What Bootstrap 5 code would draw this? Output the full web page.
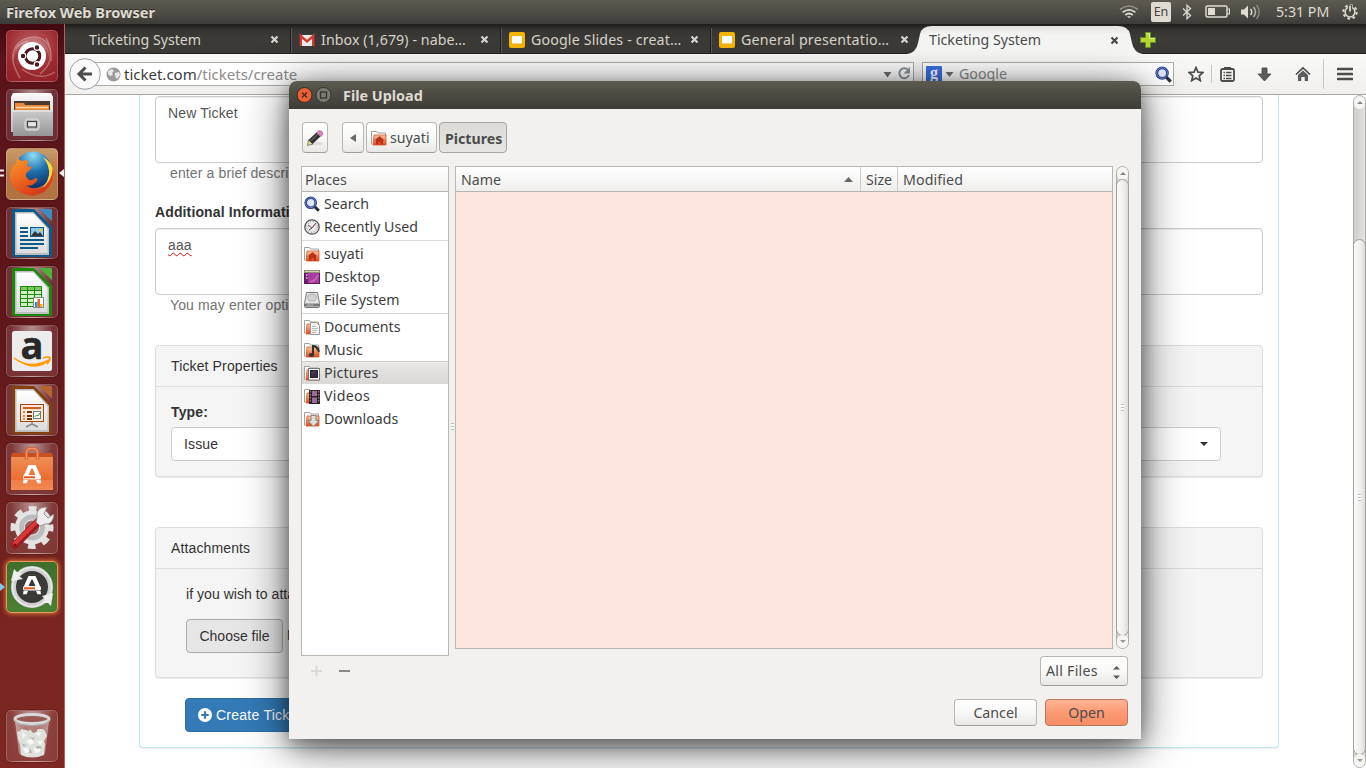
<!DOCTYPE html>
<html lang="en">
<head>
<meta charset="utf-8">
<meta name="viewport" content="width=device-width, initial-scale=1">
<title>Ticketing System</title>
<link href="https://cdn.jsdelivr.net/npm/bootstrap@5.3.0/dist/css/bootstrap.min.css" rel="stylesheet">
<style>
:root{--ui:"Noto Sans","Open Sans",sans-serif;--web:"Liberation Sans",Arial,sans-serif}
html,body{width:1366px;height:768px;overflow:hidden}
body{font-family:var(--ui);font-size:14.2px;line-height:20px;color:#3c3c3c;background:#fff}
svg{display:block;flex:none}
/* system panel */
.sys-panel{height:24px;background:linear-gradient(#5d5b50,#4b4a43 60%,#3c3b37);color:#dfdbd2;padding-left:6px;padding-right:8px}
.sys-panel b{font-size:14.55px;text-shadow:0 -1px 0 #2a2925}
.lang-box{width:20px;height:20px;margin-left:12px;background:#dfdbd2;color:#45443e;border-radius:2px;font-size:12.5px;line-height:20px;text-align:center}
/* launcher */
.launcher{width:65px;padding:6px 0 6px 6px;gap:7px;background:linear-gradient(#43090f,#5b141a 5%,#5e161a 35%,#78241f 80%,#7e2722);border-right:1px solid #a8655f}
.tile{width:52px;height:52px;border-radius:5px;border:1px solid rgba(255,255,255,.2);background:radial-gradient(ellipse at 50% -10%,rgba(255,255,255,.55),rgba(255,255,255,.12) 60%,rgba(255,255,255,.1));box-shadow:0 0 2px rgba(0,0,0,.4);position:relative}
.tile svg{margin:-1px}
.tile-dash{background:radial-gradient(circle at 50% 30%,#c0666a,#9c2a30 60%,#8f2026)}
.tile-fox{background:linear-gradient(#c99b6a,#b57745 50%,#b07040)}
.tile-upd{background:linear-gradient(#3f6e2d,#4a8034);border-color:#e79a55;box-shadow:0 0 4px 1px #d9763c}
.pip{position:absolute;top:18px}
/* tabs */
.tab-strip{height:30px;background:linear-gradient(#1d1c1a,#353430 20%,#3c3b37 50%,#3a3935);padding-left:15px;border-bottom:1px solid #22211f}
.btab{width:210px;height:29px;padding:2px 11px 0 9px;color:#d8d4cb;position:relative}
.btab+.btab:not(.on)::before{content:"";position:absolute;left:1px;top:4px;bottom:0;width:1px;background:#5a5952;box-shadow:-1px 0 #1f1e1c}
.btab.on{color:#4c4c4c;height:30px}
.btab .shape{position:absolute;left:-13px;top:1px}
.btab>span,.btab>svg:not(.shape){position:relative}
/* toolbar */
.toolbar{height:41px;background:linear-gradient(#f9f9f8,#f0efee);border-bottom:1px solid #aaa69f;position:relative}
.field-box{height:24px;background:#fff;border:1px solid #aeaca7}
.url-box{margin-left:20px;width:829px;padding-left:20px;padding-right:1px}
.url-text{font-size:15px;margin-left:3px}
.find-box{margin-left:8px;width:252px;padding-left:3px;padding-right:1px;color:#8a8a8a}
.back{position:absolute;left:4px;top:4px}
.vline{width:1px;background:#c8c8c8}
/* web page */
.web{font-family:var(--web);font-size:14px;line-height:20px;color:#333;background:#fff;letter-spacing:.13px}
.sheet{width:1140px;height:653px;margin-left:74px;padding:1px 15px 0;border:1px solid #bce8f1;border-top:0;border-radius:0 0 4px 4px;box-shadow:0 1px 1px rgba(0,0,0,.08)}
.area{height:67px;padding:6px 12px;border:1px solid #ccc;border-radius:4px;color:#555;box-shadow:inset 0 1px 1px rgba(0,0,0,.075)}
.hint{padding-left:15px;color:#737373}
.panel-x{border:1px solid #ddd;border-radius:4px;background:#f5f5f5;box-shadow:0 1px 1px rgba(0,0,0,.08)}
.panel-h{height:41px;padding:10px 15px;border-bottom:1px solid #ddd}
.pick{height:34px;width:1050px;border:1px solid #ccc;border-radius:4px;background:#fff;padding:0 12px}
.file-btn{height:34px;width:97px;border:1px solid #adadad;border-radius:4px;background:#e6e6e6;line-height:32px;text-align:center;letter-spacing:0}
.make{margin:20px 0 0 30px;height:34px;width:130px;background:#337ab7;border:1px solid #2e6da4;border-radius:4px;color:#fff;padding:0 12px;gap:4px}
.squig{text-decoration:underline wavy #e01010 1px;text-underline-offset:2px}
/* scrollbars */
.sbar{width:13px;background:linear-gradient(90deg,#cfcecc,#e2e1df);border:1px solid #b0aea9;border-radius:7px}
.sbar .cap{height:13px;background:#f6f5f4;border-radius:7px}
.sbar .cap::after{content:"";border:3px solid transparent;border-bottom-color:#8a8883;border-top:0;width:0;height:0}
.sbar .cap.dn::after{border-bottom:0;border-top:3px solid #9b9994}
.sbar .grip{border:1px solid #a3a09a;border-radius:7px;margin:-1px -1px;background:linear-gradient(90deg,#fbfbfa,#efeeed 60%,#dcdbd9)}
.ticks{width:3px;height:7px;background:repeating-linear-gradient(#bbb 0 1px,#fff 1px 3px)}
/* dialog */
.dlg{position:absolute;left:289px;top:81px;width:852px;height:658px;background:#f2f1f0;border-radius:8px 8px 0 0;box-shadow:0 8px 46px rgba(0,0,0,.62),0 5px 18px rgba(0,0,0,.38)}
.dlg-title{height:28px;border-radius:8px 8px 0 0;background:linear-gradient(#5c5a50,#4c4b43 50%,#3d3c37);color:#dfdbd2;padding-left:7px;font-size:14.4px}
.gbtn{border:1px solid #bab7b2;border-bottom-color:#a19e99;border-radius:4px;background:linear-gradient(#fff,#f8f8f7 50%,#e9e8e6);color:#4c4c4c;display:flex;align-items:center;white-space:nowrap}
.gbtn.down{background:linear-gradient(#dcdad7,#e7e6e4);border-color:#a9a6a1}
.gbtn.go{background:linear-gradient(#ffb494,#fb9a74 50%,#f58d65);border-color:#b9775b}
.pane{background:#fff;border:1px solid #bab6b0}
.pane-h{height:25px;background:linear-gradient(#fff,#efeeed);border-bottom:1px solid #b7b4af;color:#4c4c4c;padding-top:3px}
.prow{height:23px;padding-left:2px;gap:4px;display:flex;align-items:center;white-space:nowrap}
.prow.sel{background:linear-gradient(#eae8e7,#dad8d5);border-top:1px solid #cfcdca}
.psep{height:4px;padding-top:2px}
.psep::after{content:"";display:block;height:1px;background:#dcdad8}
.rose{background:#fde6dd}
</style>
</head>
<body class="d-flex flex-column">

<svg width="0" height="0" class="position-absolute" aria-hidden="true">
  <defs>
    <linearGradient id="or" x1="0" y1="0" x2="0" y2="1"><stop offset="0" stop-color="#f9c9a2"/><stop offset="1" stop-color="#dd4814"/></linearGradient>
    <linearGradient id="sv" x1="0" y1="0" x2="0" y2="1"><stop offset="0" stop-color="#fafafa"/><stop offset="1" stop-color="#b9b9b9"/></linearGradient>
    <linearGradient id="cab" x1="0" y1="0" x2="0" y2="1"><stop offset="0" stop-color="#c9c9c9"/><stop offset="1" stop-color="#969696"/></linearGradient>
    <linearGradient id="paper" x1="0" y1="0" x2="0" y2="1"><stop offset="0" stop-color="#fff"/><stop offset="1" stop-color="#dcdcdc"/></linearGradient>
    <linearGradient id="bag" x1="0" y1="0" x2="0" y2="1"><stop offset="0" stop-color="#ee8f55"/><stop offset=".68" stop-color="#ee6c30"/><stop offset=".7" stop-color="#ef7f48"/><stop offset="1" stop-color="#f28850"/></linearGradient>
    <linearGradient id="act" x1="0" y1="0" x2="0" y2="1"><stop offset="0" stop-color="#e3e2e0"/><stop offset=".3" stop-color="#f4f4f3"/><stop offset="1" stop-color="#f9f9f8"/></linearGradient>
    <radialGradient id="blu" cx=".5" cy=".1" r=".9"><stop offset="0" stop-color="#8fdcf5"/><stop offset=".5" stop-color="#1d6fae"/><stop offset="1" stop-color="#102f66"/></radialGradient>
    <linearGradient id="fx" x1="0" y1="0" x2=".6" y2="1"><stop offset="0" stop-color="#f79a2c"/><stop offset=".5" stop-color="#ef6a1f"/><stop offset="1" stop-color="#d2391a"/></linearGradient>
    <linearGradient id="glass" x1="0" y1="0" x2="1" y2="0"><stop offset="0" stop-color="#fff" stop-opacity=".5"/><stop offset=".3" stop-color="#fff" stop-opacity=".12"/><stop offset=".7" stop-color="#fff" stop-opacity=".12"/><stop offset="1" stop-color="#fff" stop-opacity=".45"/></linearGradient>
    <g id="folder"><path d="M.5 14.500v-13h5l1 1.500h8v3" fill="#fff" stroke="#a3a09b"/><path d="M3 5h12v10h-13z" fill="url(#or)" stroke="#cc5a2c" stroke-width=".8"/></g>
    <g id="homeg"><path d="M3.500 10.500L8.500 6l5 4.500h-1.500v4H9.500V12h-2v2.500H5v-4z" fill="#b8321a"/></g>
    <g id="lens"><circle cx="6.700" cy="6.700" r="5" fill="#dfe6f5" stroke="#263c82" stroke-width="2.600"/><circle cx="6.700" cy="6.700" r="5" fill="none" stroke="#7b93d6" stroke-width=".8"/><path d="M10.800 10.800l4 4" stroke="#2b2b35" stroke-width="3"/></g>
    <g id="x"><path d="M1.500 1.500l6 6M7.500 1.500l-6 6" stroke="currentColor" stroke-width="2.200"/></g>
    <g id="slides"><rect width="16" height="16" rx="2" fill="#f4b400"/><rect x="3" y="4" width="10" height="7.500" fill="#fff"/></g>
    <g id="appmark"><path d="M22.500 22h7l4.500 10h-4.500l-3-6.500h-1l-3 6.500H18zM17.500 37h4.500l-1.500 3.200H17zM30 37h4.500l.5 3.200h-3.500z" fill="#fff"/><rect x="17" y="32" width="18" height="4.600" rx="1.500" fill="#fff"/><path d="M18 34.300h11" stroke="#e95420" stroke-width="2"/></g>
    <g id="sheetpage"><path d="M6 4a2 2 0 0 1 2-2h20l18 18v28a2 2 0 0 1-2 2H8a2 2 0 0 1-2-2z" fill="currentColor"/><path d="M9 5h18.500L43 21.500V48H9z" fill="#bdbdbd"/><path d="M10.500 6.500h17L41.500 22v24h-31z" fill="url(#paper)"/></g>
  </defs>
</svg>

<header class="sys-panel d-flex align-items-center flex-shrink-0">
  <b class="me-auto">Firefox Web Browser</b>
  <svg width="20" height="14" viewBox="0 0 20 14" fill="none" stroke="#dfdbd2" stroke-width="1.700"><path d="M1 4.500q9-7 18 0" opacity=".45"/><path d="M3.600 7.300q6.400-5 12.800 0M6.200 10q3.800-3 7.600 0"/><path d="M8 11.300h4l-2 2z" fill="#dfdbd2" stroke="none"/></svg>
  <span class="lang-box">En</span>
  <svg style="margin-left:10px" width="12" height="16" viewBox="0 0 12 16" fill="none" stroke="#dfdbd2" stroke-width="1.300"><path d="M2 4.500l7.500 7L6 14.700V1.300l3.500 3.200-7.500 7"/></svg>
  <svg style="margin-left:12px" width="25" height="14" viewBox="0 0 25 14"><rect x="1" y="1" width="21" height="11" rx="1.500" fill="none" stroke="#dfdbd2" stroke-width="1.500"/><path d="M22.500 4h2v5h-2" fill="none" stroke="#dfdbd2" stroke-width="1.200"/><rect x="3" y="3" width="7" height="7" fill="#dfdbd2"/></svg>
  <svg style="margin-left:11px" width="20" height="16" viewBox="0 0 20 16" fill="none" stroke="#dfdbd2" stroke-width="1.500"><path d="M0 5.500h3l4-4v13l-4-4H0z" fill="#dfdbd2" stroke="none"/><path d="M9.500 5q2.500 3 0 6"/><path d="M12.500 3q4 5 0 10" opacity=".7"/><path d="M15.500 1q5.500 7 0 14" opacity=".4"/></svg>
  <span class="text-nowrap" style="margin-left:15px;font-size:14.2px;width:54px">5:31 PM</span>
  <svg style="margin-left:12px" width="16" height="16" viewBox="0 0 16 16" fill="none" stroke="#dfdbd2"><circle cx="8" cy="8" r="6.700" stroke-width="2" stroke-dasharray="2.600 2.660"/><circle cx="8" cy="8" r="4.900" stroke-width="1.500"/><path d="M8 1v7" stroke="#4b4a43" stroke-width="4"/><path d="M8 1.500v6" stroke-width="1.800"/></svg>
</header>

<div class="d-flex flex-grow-1" style="min-height:0">
  <nav class="launcher d-flex flex-column flex-shrink-0">
    <div class="tile tile-dash"><svg width="52" height="52" viewBox="0 0 52 52"><path d="M7 30Q6 8 30 7q16 3 15 24M14 48Q-4 18 22 11M49 42Q34 52 16 39M40 8Q52 30 34 44" fill="none" stroke="#fff" stroke-width="1.500" opacity=".3"/><path d="M8 30Q8 8 30 8q14 4 14 22-4-16-18-18Q10 14 8 30z" fill="#fff" opacity=".18"/><circle cx="26" cy="26" r="14" fill="#fff"/><circle cx="26.500" cy="26" r="7.300" fill="none" stroke="#4a1a1c" stroke-width="3"/><g fill="#4a1a1c" stroke="#fff" stroke-width="1.200"><circle cx="17" cy="26" r="2.800"/><circle cx="31" cy="17.500" r="2.800"/><circle cx="31" cy="34.500" r="2.800"/></g></svg></div>
    <div class="tile"><svg width="52" height="52" viewBox="0 0 52 52"><path d="M7 4h38l2 4v35H5V8z" fill="url(#sv)"/><path d="M8 12h36v11H8z" fill="#4a3a30"/><path d="M9 14h9l1 2h24v7H9z" fill="#e98a3a"/><path d="M10 18.500h32" stroke="#fbd9a8" stroke-width="1.500"/><path d="M7 22h40v25H7z" fill="url(#cab)"/><path d="M7 21h40v2H7z" fill="#dedede"/><rect x="19" y="30" width="14" height="11" rx="2.500" fill="#bdbdbd" stroke="#e4e4e4"/><rect x="21.500" y="32.500" width="9" height="5.500" fill="#e6e6e6" stroke="#444" stroke-width="1.200"/></svg></div>
    <div class="tile tile-fox"><svg class="pip" style="left:-6px;top:21px" width="5" height="8"><path d="M0 1.500h4M0 6.500h4" stroke="#eee" stroke-width="2.200"/></svg><svg class="pip" style="left:53px;top:21px" width="6" height="8"><path d="M5 0v8L0 4z" fill="#eee"/></svg><svg width="52" height="52" viewBox="0 0 52 52"><circle cx="27" cy="22" r="18.500" fill="url(#blu)"/><path d="M37 9q7 9 6 18-2 12-14 17 17 1 19-17-1-13-11-18z" fill="#ffd83a"/><path d="M46 17q4 10 0 18-6 11-19 12.500Q6 47 4 28q0-9 6-13l1-6q2 3 5 4 5-2 6 0l-1 5 5 1-3 4q-4 2-3 5 2 5 6 4 3-2 5-2 1 3-2 5-4 4-9 2 8 7 19 1 9-8 8-26z" fill="url(#fx)"/></svg></div>
    <div class="tile"><svg width="52" height="52" viewBox="0 0 52 52"><use href="#sheetpage" color="#0c5a8c"/><path d="M33.500 2H45a1 1 0 0 1 1 1v11.500z" fill="#3c8cc2"/><g stroke="#0c5a8c" stroke-width="2"><path d="M14 21h8M14 25h8M14 29h8M14 33h24M14 37h24M14 41h18"/></g><rect x="24.500" y="20.500" width="13" height="9" fill="#8cc8ee" stroke="#0c5a8c"/><circle cx="35" cy="23" r="1.500" fill="#f4c430"/><path d="M25 29l4-5 3 3 2-2 3 4z" fill="#333"/></svg></div>
    <div class="tile"><svg width="52" height="52" viewBox="0 0 52 52"><use href="#sheetpage" color="#1b8a0c"/><path d="M33.500 2H45a1 1 0 0 1 1 1v11.500z" fill="#4db13c"/><path d="M14.500 20.500h21v20h-21z" fill="#d3f0c4"/><path d="M14 20h22v4H14z" fill="#7fc765"/><path d="M14.500 20.500h21v20h-21zM14.500 24.500h21m-21 4h21m-21 4h21m-21 4h21m-14-16v20m7-20v20" fill="none" stroke="#178a0a"/><rect x="27.500" y="31.500" width="10" height="10" fill="#fff" stroke="#888"/><path d="M29 36h2.500v5H29z" fill="#2a8fd8"/><path d="M31.500 33h2.500v8h-2.500z" fill="#e06a2a"/><path d="M34 38h2.500v3H34z" fill="#f1b500"/></svg></div>
    <div class="tile"><svg width="52" height="52" viewBox="0 0 52 52"><rect x="6" y="6" width="40" height="40" rx="2.500" fill="#ececec"/><text x="26" y="34" text-anchor="middle" font-family="Open Sans,sans-serif" font-weight="700" font-size="38" fill="#282828" stroke="#282828" stroke-width=".5">a</text><path d="M8 33q16 12 35 2-14 13-35-2z" fill="#ff9900" stroke="#ff9900" stroke-width="1.500"/><path d="M37 33q6-2 7 0 0 3-3 6" fill="none" stroke="#ff9900" stroke-width="1.800"/></svg></div>
    <div class="tile"><svg width="52" height="52" viewBox="0 0 52 52"><use href="#sheetpage" color="#84400e"/><path d="M33.500 2H45a1 1 0 0 1 1 1v11.500z" fill="#b56530"/><rect x="14.500" y="20.500" width="23" height="17" fill="#f9e9da" stroke="#a3440e"/><path d="M17 24h18" stroke="#d4601c" stroke-width="2"/><path d="M17 28h2m-2 4h2m-2 3h2" stroke="#e08a4a" stroke-width="2"/><path d="M21 28h5m-5 4h5m-5 3h5" stroke="#7a3208" stroke-width="2"/><rect x="27.500" y="27.500" width="7" height="7" fill="#fff" stroke="#777"/><path d="M28.500 33l2-2 1.500 1 2-3" stroke="#2a9a2a" fill="none"/><path d="M26 38v2l-6 3m6-3l6 3" stroke="#888" fill="none" stroke-width="1.500"/></svg></div>
    <div class="tile"><svg width="52" height="52" viewBox="0 0 52 52"><path d="M6 10h40l1 4v2H5v-2z" fill="#c94f20"/><path d="M5 14h42v33H5z" fill="url(#bag)"/><path d="M20.500 17V10q0-4.500 4-4.500h3q4 0 4 4.500v7" fill="none" stroke="#d9602e" stroke-width="3.400"/><path d="M20.500 17V10q0-4.500 4-4.500h3q4 0 4 4.500v7" fill="none" stroke="#f2936a" stroke-width="1.400"/><use href="#appmark"/></svg></div>
    <div class="tile"><svg width="52" height="52" viewBox="0 0 52 52"><circle cx="26" cy="25.500" r="18.500" fill="none" stroke="#e1e1e1" stroke-width="6" stroke-dasharray="7.500 7.030" stroke-dashoffset="3.700"/><circle cx="26" cy="25.500" r="12" fill="none" stroke="#e4e4e4" stroke-width="10"/><circle cx="26" cy="25.500" r="10.500" fill="none" stroke="#bdbdbd" stroke-width="5"/><path d="M9 43L32 20" stroke="#9a1a1d" stroke-width="7.500" stroke-linecap="round"/><path d="M8.500 42L31 19.500" stroke="#d8383a" stroke-width="4" stroke-linecap="round"/><path d="M31 16l-1 4 4 4 5-2q8 1 9-10l-6 4-4-4 3-7q-12 0-10 11z" fill="#eee" stroke="#888" stroke-width=".8"/><circle cx="9" cy="43" r="1.600" fill="#7e1114"/></svg></div>
    <div class="tile tile-upd"><svg class="pip" style="left:-6px;top:22px" width="5" height="8"><path d="M0 0v8L5 4z" fill="#7fc9ee"/></svg><svg width="52" height="52" viewBox="0 0 52 52"><circle cx="26" cy="26" r="18.500" fill="#3a3a38" stroke="#cfcfcf" stroke-width="5"/><circle cx="26" cy="26" r="19.500" fill="none" stroke="#eaeaea" stroke-width="1.500"/><path d="M5 20L8 8l3 3 5 1-3 3 4 3z" fill="#eee"/><path d="M47 32l-2 13-3-3-6 0 3-4-3-3z" fill="#eee"/><use href="#appmark" y="-7"/></svg></div>
    <div class="tile mt-auto"><svg width="52" height="52" viewBox="0 0 52 52"><path d="M9 11l4 33q13 6 26 0l4-33z" fill="url(#glass)"/><path d="M11 22l3-1 1-2 5 1 3 1 1-2 3 4 3-1 2-3 5 0 2 2 2 5-3 5 1 3-1 11q-12 5-23 0l-1-10-2-6z" fill="#dfe1dd"/><path d="M16 22l4 3-3 4zM30 23l5-1-2 5zM20 31l6-2 2 4-4 2zM31 31l6 0-3 4zM17 38l5 0 1 4-4 1zM28 38l6 0 0 4-5 1z" fill="#f8f9f7"/><path d="M22 25l4 3 3-1-2 3zM15 33l4 2 2-1-3 3zM30 36l4 0 2 2-5 1zM24 38l2 5-3 0z" fill="#b4b8b1"/><ellipse cx="26" cy="9" rx="17" ry="4.500" fill="#985854" stroke="#d9d9d9" stroke-width="3"/><path d="M9 10q2 5.500 17 5.500T43 10" fill="none" stroke="#aaa" stroke-width="1"/></svg></div>
  </nav>

  <div class="d-flex flex-column flex-grow-1">
    <div class="tab-strip d-flex flex-shrink-0">
      <div class="btab d-flex align-items-center"><span class="me-auto text-nowrap">Ticketing System</span><svg width="9" height="9"><use href="#x"/></svg></div>
      <div class="btab d-flex align-items-center"><svg width="16" height="16" viewBox="0 0 16 16" style="margin-right:6px"><path d="M1 3h14v11H1z" fill="#eee"/><path d="M1.800 14V4L8 9.500 14.200 4v10" fill="none" stroke="#d93a2f" stroke-width="2.400"/></svg><span class="me-auto text-nowrap" style="letter-spacing:.08px">Inbox (1,679) - nabe…</span><svg width="9" height="9"><use href="#x"/></svg></div>
      <div class="btab d-flex align-items-center"><svg width="16" height="16" style="margin-right:6px"><use href="#slides"/></svg><span class="me-auto text-nowrap" style="letter-spacing:.16px">Google Slides - creat…</span><svg width="9" height="9"><use href="#x"/></svg></div>
      <div class="btab d-flex align-items-center"><svg width="16" height="16" style="margin-right:6px"><use href="#slides"/></svg><span class="me-auto text-nowrap" style="letter-spacing:.24px">General presentatio…</span><svg width="9" height="9"><use href="#x"/></svg></div>
      <div class="btab on d-flex align-items-center"><svg class="shape" width="237" height="29" viewBox="0 0 237 29"><path d="M0 29Q9 28 11 18L13 9Q15 1 25 1H211Q221 1 223 9L225 18Q227 28 236 29z" fill="url(#act)"/></svg><span class="me-auto text-nowrap">Ticketing System</span><svg width="9" height="9"><use href="#x"/></svg></div>
      <svg style="margin:8px 0 0 10px" width="16" height="16" viewBox="0 0 16 16"><path d="M5.500.5h5v5h5v5h-5v5h-5v-5h-5v-5h5z" fill="#b7d433" stroke="#5f9423"/><path d="M6.500 1.500h3v5h5" fill="none" stroke="#e1ef8e"/></svg>
    </div>

    <div class="toolbar d-flex align-items-center flex-shrink-0">
      <div class="field-box url-box d-flex align-items-center">
        <svg width="15" height="15" viewBox="0 0 15 15"><circle cx="7.500" cy="7.500" r="7" fill="#9a9a9a"/><path d="M2 4l4-2 2 2-2 2 1 2-3 1-2-2zM9 6l4-1 1 3-3 4-2-3z" fill="#e8e8e8"/></svg>
        <span class="url-text text-nowrap me-auto">ticket.com<span style="color:#8c8c8c">/tickets/create</span></span>
        <svg width="30" height="16" viewBox="0 0 30 16"><path d="M1.500 6h8l-4 5.500z" fill="#6e6e6e"/><path d="M26 3.800A5 5 0 1 0 27 9" fill="none" stroke="#8b939b" stroke-width="2"/><path d="M28 1v6.500h-6.500z" fill="#8b939b"/></svg>
      </div>
      <div class="field-box find-box d-flex align-items-center">
        <svg width="28" height="16" viewBox="0 0 28 16"><rect width="16" height="16" rx="1" fill="#3b6fe0"/><text x="8" y="11.500" text-anchor="middle" font-family="Liberation Serif,serif" font-weight="700" font-size="16" fill="#fff">g</text><path d="M19.500 6h8l-4 5z" fill="#6e6e6e"/></svg>
        <span class="me-auto" style="margin-left:5px">Google</span>
        <svg width="17" height="17" viewBox="0 0 16 16"><use href="#lens"/></svg>
      </div>
      <svg style="margin-left:14px" width="16" height="16" viewBox="0 0 16 16"><path d="M8 1.500l2 4.600 4.900.4-3.700 3.300 1.100 4.800L8 12l-4.300 2.600 1.100-4.800L1.100 6.500 6 6.100z" fill="none" stroke="#4c4c4c" stroke-width="1.700"/></svg>
      <span class="vline" style="height:18px;margin-left:7px"></span>
      <svg style="margin-left:8px" width="15" height="16" viewBox="0 0 15 16"><rect x="1" y="3" width="13" height="12" rx="1.500" fill="none" stroke="#4c4c4c" stroke-width="1.800"/><rect x="4" y="1" width="7" height="3" fill="#4c4c4c"/><path d="M3.500 6.500h1.500m1 0h5.500m-8 3h1.500m1 0h5.500m-8 3h1.500m1 0h5.500" stroke="#4c4c4c" stroke-width="1.500"/></svg>
      <svg style="margin-left:22px" width="15" height="15" viewBox="0 0 15 15"><path d="M5 1h5v6h4L7.500 14 1 7h4z" fill="#5c5c5c" stroke="#444" stroke-width=".8"/></svg>
      <svg style="margin-left:23px" width="16" height="16" viewBox="0 0 16 16"><path d="M1 8.500L8 2l7 6.500" fill="none" stroke="#4c4c4c" stroke-width="1.700"/><path d="M3 9l5-4.500L13 9v6H9.700v-4H6.300v4H3z" fill="#5c5c5c"/></svg>
      <span class="vline" style="height:30px;margin-left:12px"></span>
      <svg style="margin-left:13px" width="16" height="14" viewBox="0 0 16 14"><path d="M1 2h14M1 7h14M1 12h14" stroke="#4c4c4c" stroke-width="2.600" stroke-linecap="round"/></svg>
      <svg class="back" width="32" height="32" viewBox="0 0 32 32"><circle cx="16" cy="16" r="15.300" fill="#fbfbfb" stroke="#98a0aa"/><path d="M23 16H10.500M16.500 9.500L10 16l6.500 6.500" fill="none" stroke="#4c4c4c" stroke-width="3"/></svg>
    </div>

    <div class="web d-flex flex-grow-1 justify-content-between" style="min-height:0">
      <main class="sheet text-nowrap">
        <div class="area">New Ticket</div>
        <div class="hint">enter a brief descri</div>
        <div class="fw-bold" style="margin:19px 0 6px">Additional Informati</div>
        <div class="area"><span class="squig">aaa</span></div>
        <div class="hint">You may enter opti</div>
        <section class="panel-x" style="margin-top:30px;height:132px">
          <div class="panel-h">Ticket Properties</div>
          <div style="padding:15px 15px">
            <div class="fw-bold" style="margin-bottom:5px">Type:</div>
            <div class="pick d-flex align-items-center justify-content-between"><span>Issue</span><svg width="8" height="4"><path d="M0 0h8L4 4z" fill="#333"/></svg></div>
          </div>
        </section>
        <section class="panel-x" style="margin-top:50px;height:151px">
          <div class="panel-h">Attachments</div>
          <div style="padding:15px 30px">
            <div style="margin-bottom:15px;letter-spacing:.05px">if you wish to atta</div>
            <div class="d-flex"><div class="file-btn">Choose file</div><span style="margin:6px 0 0 4px">N</span></div>
          </div>
        </section>
        <div class="make d-flex align-items-center"><svg width="14" height="14" viewBox="0 0 14 14"><circle cx="7" cy="7" r="7" fill="#fff"/><path d="M7 3.200v7.600M3.200 7h7.600" stroke="#337ab7" stroke-width="2.200"/></svg><span style="letter-spacing:.25px">Create Tick</span></div>
      </main>
      <div class="sbar d-flex flex-column">
        <div class="cap d-flex align-items-center justify-content-center"></div>
        <div style="height:131px"></div>
        <div class="grip flex-grow-1 d-flex align-items-center justify-content-center"><div class="ticks"></div></div>
        <div class="cap dn d-flex align-items-center justify-content-center"></div>
      </div>
    </div>
  </div>
</div>

<section class="dlg">
  <div class="dlg-title d-flex align-items-center fw-bold">
    <svg width="36" height="18" viewBox="0 0 36 18"><circle cx="8.500" cy="9" r="7.500" fill="#ea6037" stroke="#3a2a22"/><path d="M6 6.500l5 5m0-5l-5 5" stroke="#4a2a1c" stroke-width="1.400"/><circle cx="27.500" cy="9" r="7.500" fill="#7b7a73" stroke="#33322e"/><rect x="24.500" y="6" width="6" height="6" fill="none" stroke="#33322e" stroke-width="1.300"/></svg>
    <span style="margin-left:11px;padding-top:2px">File Upload</span>
  </div>
  <div class="d-flex" style="padding:13px 0 0 13px">
    <div class="gbtn justify-content-center" style="width:26px;height:31px"><svg width="18" height="18" viewBox="0 0 18 18"><ellipse cx="11" cy="14.500" rx="6" ry="1.800" fill="#ddd"/><path d="M1.500 16.500l1-5.500 4.500 4z" fill="#efe29a" stroke="#554" stroke-width=".7"/><path d="M2.500 11L10.500 3.500l4 4L6.500 15z" fill="#333"/><path d="M4.500 12L12 5" stroke="#888" stroke-width=".8"/><path d="M10.800 3.500l2-2q4 0 4 4l-2 2z" fill="#d98ac8" stroke="#946" stroke-width=".6"/></svg></div>
    <div class="gbtn justify-content-center" style="width:22px;height:31px;margin-left:14px"><svg width="6" height="8"><path d="M6 0v8L0 4z" fill="#6a6a6a"/></svg></div>
    <div class="gbtn" style="width:71px;height:31px;margin-left:2px;padding-left:4px;gap:3px"><svg width="16" height="16" viewBox="0 0 16 16"><use href="#folder"/><use href="#homeg"/></svg>suyati</div>
    <div class="gbtn down fw-bold" style="width:68px;height:31px;margin-left:2px;padding-left:5px;padding-top:2px">Pictures</div>
  </div>
  <div class="d-flex" style="padding:13px 12px 0 12px">
    <div class="pane" style="width:148px;height:490px">
      <div class="pane-h" style="padding-left:3px">Places</div>
      <div class="prow"><svg width="16" height="16"><use href="#lens"/></svg>Search</div>
      <div class="prow"><svg width="16" height="16" viewBox="0 0 16 16"><circle cx="8" cy="8" r="7.200" fill="#e9e9e9" stroke="#555" stroke-width="1.300"/><circle cx="8" cy="8" r="5.300" fill="none" stroke="#888" stroke-dasharray="1 1.780"/><path d="M4 6l4 3 4-5M8 9l-3 2" stroke="#555" fill="none"/><path d="M8 9l4-5" stroke="#c44" stroke-width=".7"/></svg>Recently Used</div>
      <div class="psep"></div>
      <div class="prow"><svg width="16" height="16"><use href="#folder"/><use href="#homeg"/></svg>suyati</div>
      <div class="prow"><svg width="16" height="16" viewBox="0 0 16 16"><rect x=".5" y="1.500" width="15" height="13" fill="#a93ca0" stroke="#5a1a58"/><path d="M0 1h16v3H0z" fill="#8f8c78"/><path d="M1 2h14v1H1z" fill="#d8d4b8"/><path d="M1 4h3v10H1z" fill="#6d2270"/><path d="M2 6h1.500m-1.500 3h1.500" stroke="#e8c8e8" stroke-width="1.500"/><path d="M6 13q6-1 8-7" stroke="#c562b8" stroke-width="2" fill="none"/></svg><span style="letter-spacing:.12px">Desktop</span></div>
      <div class="prow"><svg width="16" height="16" viewBox="0 0 16 16"><path d="M2.500.5h11l2 11v3a1 1 0 0 1-1 1h-13a1 1 0 0 1-1-1v-3z" fill="#e6e6e6" stroke="#777"/><ellipse cx="8" cy="5.500" rx="4.500" ry="3.500" fill="#d2d2d2" stroke="#b0b0b0"/><path d="M1 11.500h14v3H1z" fill="#777"/><path d="M2.500 13h7" stroke="#bbb"/></svg><span style="letter-spacing:.1px">File System</span></div>
      <div class="psep"></div>
      <div class="prow"><svg width="16" height="16"><use href="#folder"/><path d="M6.500 3.500h6l3 3v9h-9z" fill="#f2f2f2" stroke="#999"/><path d="M8 7.500h4m-4 2h6m-6 2h5m-5 2h4" stroke="#bbb"/></svg>Documents</div>
      <div class="prow"><svg width="16" height="16"><use href="#folder"/><path d="M9 13V4q3 0 5 4V6M9 4h1q3 0 5 6" stroke="#333" stroke-width="2" fill="none"/><ellipse cx="7.500" cy="13" rx="2.600" ry="2.100" fill="#333"/></svg>Music</div>
      <div class="prow sel"><svg width="16" height="16"><use href="#folder"/><rect x="4.500" y="3.500" width="11" height="11.500" fill="#fff" stroke="#777"/><rect x="6.500" y="5.500" width="7" height="7" fill="#3c2c4c" stroke="#222"/><path d="M7.500 8q3 0 4-2" stroke="#5c4a72" fill="none"/></svg><span style="letter-spacing:.14px">Pictures</span></div>
      <div class="prow"><svg width="16" height="16"><use href="#folder"/><rect x="5" y="2" width="11" height="14" fill="#2c2326"/><path d="M8 3h5v5H8zM8 9.500h5v5.500H8z" fill="#9a6aa4"/><path d="M6.300 3v12M14.700 3v12" stroke="#b89a7a" stroke-dasharray="1.500 1.500"/></svg><span style="letter-spacing:.3px">Videos</span></div>
      <div class="prow"><svg width="16" height="16"><use href="#folder"/><path d="M7 4.500h5v5h3l-5.500 6-5.500-6h3z" fill="#ddd" stroke="#888"/></svg>Downloads</div>
    </div>
    <div class="d-flex align-items-center justify-content-center" style="width:6px;height:520px;margin-bottom:-30px"><div class="ticks"></div></div>
    <div>
      <div class="pane rose" style="width:658px;height:483px">
        <div class="pane-h d-flex">
          <div class="d-flex justify-content-between" style="width:404px;padding:0 7px 0 5px">Name<svg width="9" height="5" style="margin-top:7px"><path d="M0 5h9L4.500 0z" fill="#6a6a6a"/></svg></div>
          <div style="width:37px;margin-top:-3px;padding:3px 0 0 5px;border-left:1px solid #cfcdc9">Size</div>
          <div style="margin-top:-3px;padding:3px 0 0 5px;border-left:1px solid #cfcdc9;letter-spacing:.12px">Modified</div>
        </div>
      </div>
      <div class="d-flex justify-content-end" style="width:673px;padding-top:7px"><div class="gbtn justify-content-between" style="width:88px;height:30px;padding:0 7px 0 5px"><span style="letter-spacing:.25px">All Files</span><svg width="7" height="13" style="margin-top:2px"><path d="M0 3.500h7L3.500 0zM0 9.500h7L3.500 13z" fill="#5a5a5a"/></svg></div></div>
    </div>
    <div class="sbar d-flex flex-column flex-shrink-0" style="height:483px;margin-left:-12px">
      <div class="cap d-flex align-items-center justify-content-center"></div>
      <div class="grip flex-grow-1 d-flex align-items-center justify-content-center"><div class="ticks"></div></div>
      <div class="cap dn d-flex align-items-center justify-content-center"></div>
    </div>
  </div>
  <div class="d-flex" style="padding:0 13px 0 21px;margin-top:-28px">
    <svg style="margin-top:7px" width="41" height="12"><path d="M1 6h11M6.500.5v11" stroke="#dbd9d7" stroke-width="2"/><path d="M29 6h11" stroke="#8a8884" stroke-width="2"/></svg>
    <div class="gbtn justify-content-center" style="width:83px;height:27px;margin:41px 8px 0 auto">Cancel</div>
    <div class="gbtn go justify-content-center" style="width:83px;height:27px;margin-top:41px">Open</div>
  </div>
</section>

<script src="https://cdn.jsdelivr.net/npm/bootstrap@5.3.0/dist/js/bootstrap.bundle.min.js"></script>
</body>
</html>
